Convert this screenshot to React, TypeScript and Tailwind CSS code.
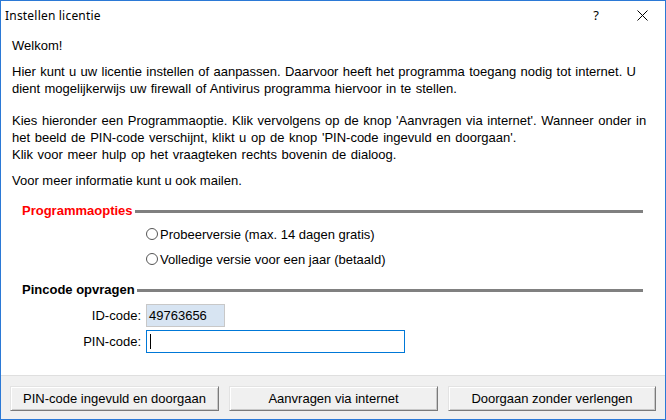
import React from 'react';

const body = { fontFamily: '"Liberation Sans", Arial, sans-serif' };

function SectionHeader({ title, red }: { title: string; red?: boolean }) {
  return (
    <div className="flex items-center pl-[21px] pr-[22px] h-[20px]">
      <span className={`text-[13px] font-bold leading-[20px] ${red ? 'text-[#ff0000]' : 'text-black'}`}>{title}</span>
      <div className="flex-1 ml-[2px] h-[3px] bg-[#808080]" />
    </div>
  );
}

function Radio({ label }: { label: string }) {
  return (
    <label className="flex items-center h-[20px] pl-[145px] text-[13px]">
      <span className="w-[12px] h-[12px] rounded-full border border-[#555] bg-white mr-[2px]" />
      {label}
    </label>
  );
}

function Btn({ children, w }: { children: React.ReactNode; w: string }) {
  return (
    <button
      className={`${w} h-[25px] bg-[#f0f0f0] text-[13px] text-black border border-t-[#e3e3e3] border-l-[#e3e3e3] border-b-[#7a7a7a] border-r-[#7a7a7a] shadow-[inset_1px_1px_0_#ffffff,inset_-1px_-1px_0_#c8c8c8]`}
    >
      {children}
    </button>
  );
}

export default function App() {
  return (
    <div className="w-[666px] h-[420px] bg-white border border-[#2b79d6] flex flex-col text-black" style={body}>
      {/* titelbalk */}
      <div className="h-[29px] flex items-center pl-[4px] shrink-0">
        <span className="text-[12px] flex-1 tracking-[0.2px]" style={{ fontFamily: '"Noto Sans", sans-serif' }}>
          Instellen licentie
        </span>
        <span className="w-[46px] text-center text-[13px]" style={{ fontFamily: '"Noto Sans", sans-serif' }}>?</span>
        <span className="w-[46px] flex justify-center">
          <svg width="11" height="11" viewBox="0 0 11 11">
            <path d="M0.5 0.5 L10.5 10.5 M10.5 0.5 L0.5 10.5" stroke="#000" strokeWidth="1" />
          </svg>
        </span>
      </div>

      <div className="flex-1 text-[13px] leading-[17px]">
        <div className="pl-[11px] pt-[7px] [word-spacing:0.7px]">
          <p>Welkom!</p>
          <p className="mt-[9px]">
            Hier kunt u uw licentie instellen of aanpassen. Daarvoor heeft het programma toegang nodig tot internet. U
            <br />
            dient mogelijkerwijs uw firewall of Antivirus programma hiervoor in te stellen.
          </p>
          <p className="mt-[15px] [word-spacing:1px]">
            Kies hieronder een Programmaoptie. Klik vervolgens op de knop 'Aanvragen via internet'. Wanneer onder in
            <br />
            het beeld de PIN-code verschijnt, klikt u op de knop 'PIN-code ingevuld en doorgaan'.
            <br />
            Klik voor meer hulp op het vraagteken rechts bovenin de dialoog.
          </p>
          <p className="mt-[9px] [word-spacing:0px]">Voor meer informatie kunt u ook mailen.</p>
        </div>

        <div className="mt-[12px]">
          <SectionHeader title="Programmaopties" red />
        </div>
        <div className="mt-[3px] flex flex-col gap-[5px]">
          <Radio label="Probeerversie (max. 14 dagen gratis)" />
          <Radio label="Volledige versie voor een jaar (betaald)" />
        </div>

        <div className="mt-[11px]">
          <SectionHeader title="Pincode opvragen" />
        </div>
        <div className="mt-[4px] flex flex-col gap-[3px]">
          <div className="flex items-center">
            <span className="w-[141px] text-right pr-[1px]">ID-code:</span>
            <div className="ml-[4px] w-[79px] h-[23px] border border-[#c8c8c8] bg-[#d7e4f2] flex items-center pl-[2px]">
              49763656
            </div>
          </div>
          <div className="flex items-center">
            <span className="w-[141px] text-right pr-[1px]">PIN-code:</span>
            <div className="ml-[4px] w-[259px] h-[23px] border border-[#0078d7] bg-white flex items-center pl-[3px]">
              <span className="w-[1px] h-[15px] bg-black" />
            </div>
          </div>
        </div>
      </div>

      {/* knoppenbalk */}
      <div className="h-[44px] shrink-0 bg-[#f0f0f0] border-t border-[#dfdfdf] flex items-start pt-[10px] pl-[9px] gap-[10px]">
        <Btn w="w-[209px]">PIN-code ingevuld en doorgaan</Btn>
        <Btn w="w-[209px]">Aanvragen via internet</Btn>
        <Btn w="w-[208px]">Doorgaan zonder verlengen</Btn>
      </div>
    </div>
  );
}
